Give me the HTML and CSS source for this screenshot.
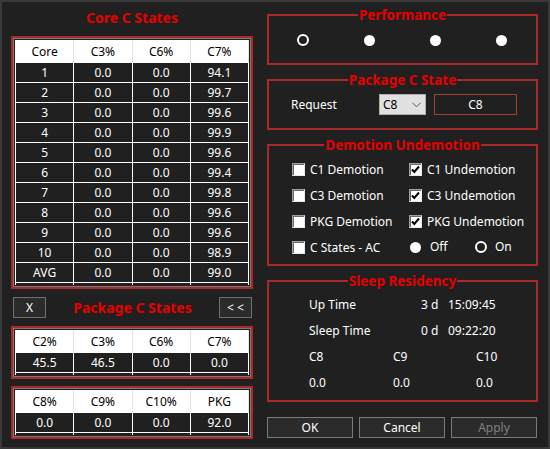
FILE: index.html
```html
<!DOCTYPE html>
<html>
<head>
<meta charset="utf-8">
<link rel="stylesheet" href="styles.css">
</head>
<body>
<div class="win">
  <div class="left">
    <div class="title">Core C States</div>
    <div class="frame">
      <div class="inner">
        <div class="head"><div>Core</div><div>C3%</div><div>C6%</div><div>C7%</div></div>
        <div class="body">
          <div>1</div><div>0.0</div><div>0.0</div><div>94.1</div>
          <div>2</div><div>0.0</div><div>0.0</div><div>99.7</div>
          <div>3</div><div>0.0</div><div>0.0</div><div>99.6</div>
          <div>4</div><div>0.0</div><div>0.0</div><div>99.9</div>
          <div>5</div><div>0.0</div><div>0.0</div><div>99.6</div>
          <div>6</div><div>0.0</div><div>0.0</div><div>99.4</div>
          <div>7</div><div>0.0</div><div>0.0</div><div>99.8</div>
          <div>8</div><div>0.0</div><div>0.0</div><div>99.6</div>
          <div>9</div><div>0.0</div><div>0.0</div><div>99.6</div>
          <div>10</div><div>0.0</div><div>0.0</div><div>98.9</div>
          <div>AVG</div><div>0.0</div><div>0.0</div><div>99.0</div>
          <div class="tail"></div><div class="tail"></div><div class="tail"></div><div class="tail"></div>
        </div>
      </div>
    </div>
    <div class="pkgbar">
      <div class="sbtn">X</div>
      <div class="title2">Package C States</div>
      <div class="sbtn">&lt; &lt;</div>
    </div>
    <div class="frame pkg1">
      <div class="inner">
        <div class="head"><div>C2%</div><div>C3%</div><div>C6%</div><div>C7%</div></div>
        <div class="body">
          <div>45.5</div><div>46.5</div><div>0.0</div><div>0.0</div>
          <div class="tail"></div><div class="tail"></div><div class="tail"></div><div class="tail"></div>
        </div>
      </div>
    </div>
    <div class="frame pkg2">
      <div class="inner">
        <div class="head"><div>C8%</div><div>C9%</div><div>C10%</div><div>PKG</div></div>
        <div class="body">
          <div>0.0</div><div>0.0</div><div>0.0</div><div>92.0</div>
          <div class="tail"></div><div class="tail"></div><div class="tail"></div><div class="tail"></div>
        </div>
      </div>
    </div>
  </div>

  <div class="right">
    <fieldset class="grp perf">
      <legend>Performance</legend>
      <div class="radios">
        <div class="cell"><span class="ring"></span></div>
        <div class="cell"><span class="dot"></span></div>
        <div class="cell"><span class="dot"></span></div>
        <div class="cell"><span class="dot"></span></div>
      </div>
    </fieldset>

    <fieldset class="grp pcs">
      <legend>Package C State</legend>
      <div class="reqrow">
        <span class="reqlabel">Request</span>
        <div class="select"><span>C8</span><svg width="9" height="6" viewBox="0 0 9 6"><polyline points="0.5,0.8 4.5,4.8 8.5,0.8" fill="none" stroke="#555" stroke-width="1"/></svg></div>
        <div class="tbox">C8</div>
      </div>
    </fieldset>

    <fieldset class="grp demo">
      <legend>Demotion Undemotion</legend>
      <div class="checks">
        <div class="ck"><span class="box"></span>C1 Demotion</div>
        <div class="ck"><span class="box"><svg width="11" height="11" viewBox="0 0 11 11"><polyline points="2,5.5 4.3,8 9,2.5" fill="none" stroke="#000" stroke-width="2"/></svg></span>C1 Undemotion</div>
        <div class="ck"><span class="box"></span>C3 Demotion</div>
        <div class="ck"><span class="box"><svg width="11" height="11" viewBox="0 0 11 11"><polyline points="2,5.5 4.3,8 9,2.5" fill="none" stroke="#000" stroke-width="2"/></svg></span>C3 Undemotion</div>
        <div class="ck"><span class="box"></span>PKG Demotion</div>
        <div class="ck"><span class="box"><svg width="11" height="11" viewBox="0 0 11 11"><polyline points="2,5.5 4.3,8 9,2.5" fill="none" stroke="#000" stroke-width="2"/></svg></span>PKG Undemotion</div>
        <div class="ck"><span class="box"></span>C States - AC</div>
        <div class="ck onoff">
          <span class="opt off"><span class="dot"></span><span class="otxt">Off</span></span>
          <span class="opt"><span class="ring"></span><span class="otxt">On</span></span>
        </div>
      </div>
    </fieldset>

    <fieldset class="grp sleep">
      <legend>Sleep Residency</legend>
      <div class="srows">
        <div class="srow"><span class="slabel">Up Time</span><span class="days">3 d</span><span>15:09:45</span></div>
        <div class="srow"><span class="slabel">Sleep Time</span><span class="days">0 d</span><span>09:22:20</span></div>
        <div class="srow three"><span>C8</span><span>C9</span><span>C10</span></div>
        <div class="srow three"><span>0.0</span><span>0.0</span><span>0.0</span></div>
      </div>
    </fieldset>

    <div class="buttons">
      <div class="btn">OK</div>
      <div class="btn">Cancel</div>
      <div class="btn disabled">Apply</div>
    </div>
  </div>
</div>
</body>
</html>
```

FILE: styles.css
```css
* { box-sizing: border-box; }
html, body { margin: 0; padding: 0; }
body {
  width: 550px;
  height: 449px;
  background: #202020;
  color: #fff;
  font-family: "Noto Sans", "Open Sans", sans-serif;
  font-size: 12px;
  overflow: hidden;
  box-shadow: inset 0 0 0 2px #383838;
}
.win { display: flex; height: 100%; }

/* left column */
.left { flex: none; width: 253px; padding-left: 11px; }
.title {
  width: 242px;
  height: 36px;
  line-height: 36px;
  text-align: center;
  font-weight: bold;
  font-size: 14px;
  color: #e50000;
}
.frame { width: 242px; border: 2px solid #a82a2a; }
.inner { border: 1px solid #7a7a7a; padding: 1px; }
.head {
  display: grid;
  grid-template-columns: repeat(4, 1fr);
  column-gap: 1px;
  background: #e3e3e3;
  border-left: 1px solid #fff;
  border-right: 1px solid #e3e3e3;
}
.head div {
  background: #fff;
  color: #000;
  height: 23px;
  line-height: 23px;
  text-align: center;
}
.body {
  display: grid;
  grid-template-columns: repeat(4, 1fr);
  gap: 1px;
  background: #fff;
  padding: 0 1px;
}
.body div {
  background: #202020;
  height: 19px;
  line-height: 19px;
  text-align: center;
}
.body .tail { height: 2px; }

.pkgbar {
  width: 242px;
  margin-top: 8px;
  height: 21px;
  display: flex;
  align-items: center;
  justify-content: space-between;
  padding: 0 1px 0 2px;
}
.sbtn {
  width: 33px;
  height: 21px;
  border: 1px solid #707070;
  background: #2b2b2b;
  display: flex;
  align-items: center;
  justify-content: center;
}
.title2 { font-weight: bold; font-size: 14px; color: #e50000; }
.pkg1 { margin-top: 8px; }
.pkg2 { margin-top: 7px; }

/* right column */
.right { flex: none; margin-left: 14px; width: 271px; display: flex; flex-direction: column; }
.grp {
  margin: 0;
  padding: 0;
  width: 271px;
  border: 2px solid #a82a2a;
  min-inline-size: 0;
}
.grp legend {
  margin: 0 auto;
  padding: 0 1px;
  font-weight: bold;
  font-size: 13.5px;
  line-height: 14px;
  color: #e50000;
}
.perf { margin-top: 8px; height: 57px; }
.pcs { margin-top: 8px; height: 57px; }
.demo { margin-top: 8px; height: 128px; }
.sleep { margin-top: 8px; height: 128px; }

.radios { display: flex; height: 36px; padding-left: 1px; }
.cell { width: 66px; display: flex; align-items: center; justify-content: center; }
.dot { display: block; width: 11px; height: 11px; border-radius: 50%; background: #fff; flex: none; }
.ring { display: block; width: 12px; height: 12px; border-radius: 50%; border: 2px solid #fff; background: #202020; flex: none; }

.reqrow { display: flex; align-items: center; height: 21px; margin-top: 7px; padding-left: 22px; }
.reqlabel { width: 88px; }
.select {
  width: 47px;
  height: 21px;
  background: #e1e1e1;
  border: 1px solid #adadad;
  color: #000;
  display: flex;
  align-items: center;
  justify-content: space-between;
  padding: 0 4px 0 3px;
}
.tbox {
  margin-left: 8px;
  width: 83px;
  height: 21px;
  border: 1px solid #a2402c;
  display: flex;
  align-items: center;
  justify-content: center;
}

.checks {
  display: grid;
  grid-template-columns: 117px auto;
  grid-auto-rows: 26px;
  padding: 4px 0 0 23px;
}
.ck { display: flex; align-items: center; }
.box {
  flex: none;
  width: 13px;
  height: 13px;
  margin-right: 5px;
  background: #fff;
  border: 1px solid;
  border-color: #a0a0a0 #e8e8e8 #e8e8e8 #a0a0a0;
  box-shadow: inset 1px 1px 0 #6a6a6a;
  display: flex;
  align-items: center;
  justify-content: center;
}
.box svg { display: block; }
.opt { display: flex; align-items: center; }
.off { width: 66px; padding-left: 1px; }
.off .otxt { margin-left: 9px; margin-top: -2px; }
.opt .ring + .otxt { margin-left: 8px; margin-top: -2px; }

.srows { padding: 3px 0 0 40px; }
.srow { display: flex; align-items: center; height: 26px; }
.slabel { width: 112px; }
.days { width: 27px; }
.three span:nth-child(1) { width: 84px; }
.three span:nth-child(2) { width: 83px; }

.buttons { margin-top: 15px; display: flex; gap: 6px; }
.btn {
  width: 86px;
  height: 21px;
  border: 1px solid #7a7a7a;
  background: #2b2b2b;
  display: flex;
  align-items: center;
  justify-content: center;
}
.btn.disabled { color: #808080; }
```
